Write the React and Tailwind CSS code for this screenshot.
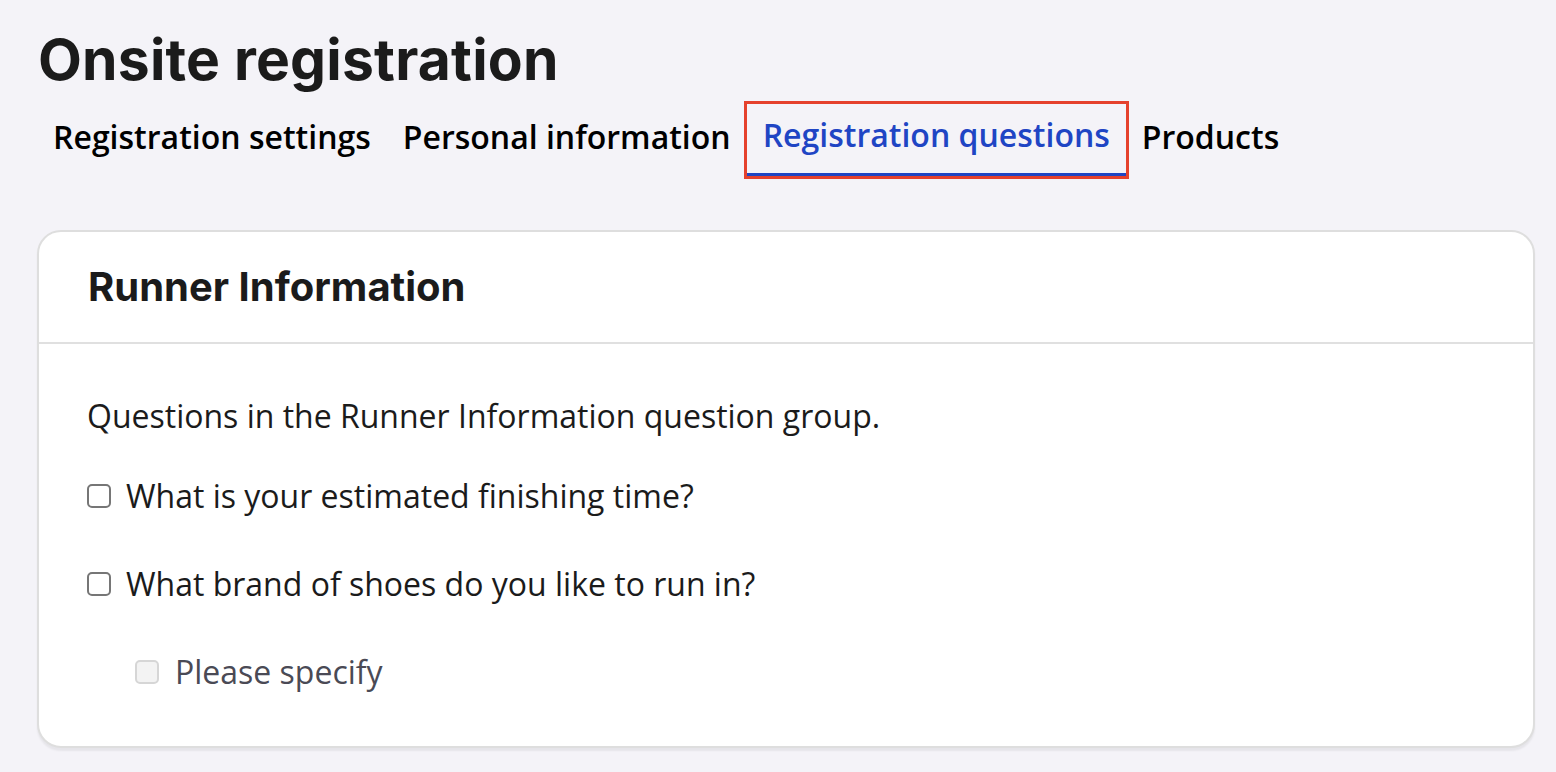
const tabs = ['Registration settings', 'Personal information', 'Registration questions', 'Products']

const questions = [
  { id: 'finish', label: 'What is your estimated finishing time?' },
  { id: 'shoes', label: 'What brand of shoes do you like to run in?' },
]

function Box({ disabled }) {
  return (
    <span
      className={
        disabled
          ? 'w-[24px] h-[24px] rounded-[5px] border-2 border-[#d6d6d6] bg-[#f3f3f3] shrink-0'
          : 'w-[24px] h-[24px] rounded-[5px] border-2 border-[#767676] bg-white shrink-0'
      }
    />
  )
}

export default function App() {
  return (
    <div className="min-h-[772px] bg-[#f4f3f8] pl-[37px] pr-[21px] pt-[22px] text-[#1b1b1b]" style={{ fontFamily: '"Open Sans", sans-serif' }}>
      <h1 className="text-[57px] leading-[76px] font-bold tracking-[0.2px] pl-[1px]" style={{ fontFamily: 'Inter, sans-serif' }}>
        Onsite registration
      </h1>
      <div className="flex mt-[6px]">
        {tabs.map((t, i) => (
          <div
            key={t}
            className={
              i === 2
                ? 'h-[72px] px-[16px] pb-[7px] flex items-center text-[32px] font-semibold text-[#1f45c4] border-b-[3px] border-[#1f45c4] outline-[3px] outline-[#e5412d]'
                : 'h-[72px] px-[16px] pb-[7px] flex items-center text-[32px] font-semibold text-black'
            }
          >
            {t}
          </div>
        ))}
      </div>

      <div className="mt-[54px] bg-white border-2 border-[#dedede] rounded-[24px] shadow-[0_3px_2px_rgba(0,0,0,0.06)]">
        <div className="h-[112px] px-[49px] flex items-center border-b-2 border-[#e0e0e0]">
          <h2 className="text-[40px] font-bold" style={{ fontFamily: 'Inter, sans-serif' }}>
            Runner Information
          </h2>
        </div>
        <div className="px-[48px] pt-[50px] pb-[52px] text-[32px]">
          <p className="leading-[44px]">Questions in the Runner Information question group.</p>
          <div className="mt-[36px] flex flex-col gap-[44px]">
            {questions.map((q) => (
              <label key={q.id} className="flex items-center gap-[15px] leading-[44px]">
                <Box />
                <span>{q.label}</span>
              </label>
            ))}
            <label className="flex items-center gap-[16px] leading-[44px] pl-[48px] text-[#4a4a55]">
              <Box disabled />
              <span>Please specify</span>
            </label>
          </div>
        </div>
      </div>
    </div>
  )
}
